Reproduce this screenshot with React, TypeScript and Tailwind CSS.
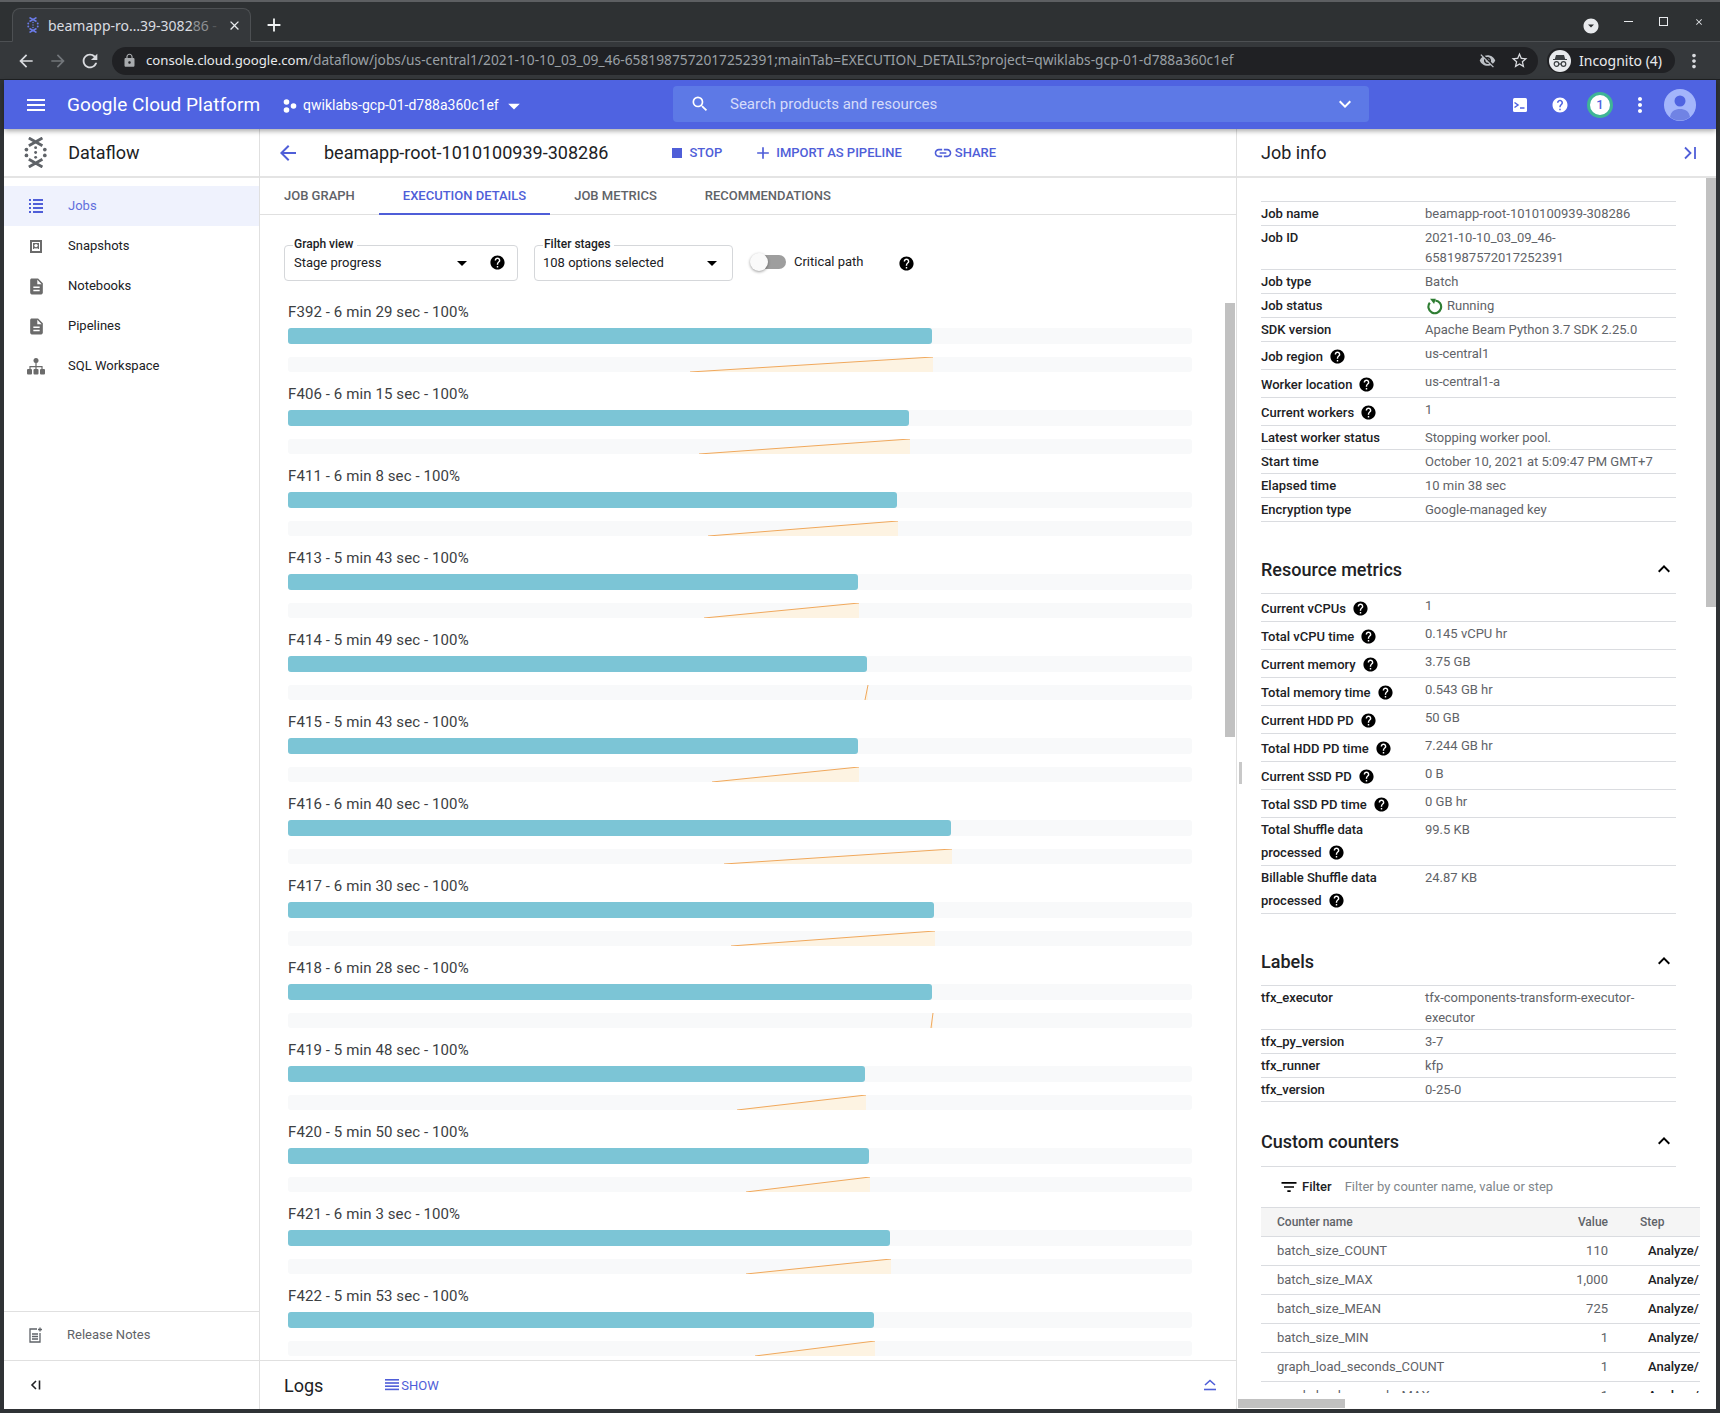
import React from "react";
import {
  MdAdd, MdArrowBack, MdArrowDropDown, MdArrowForward, MdClose, MdDescription, MdExpandLess, MdFilterList,
  MdHelp, MdKeyboardArrowDown, MdLink, MdLock, MdMenu, MdMoreVert, MdRefresh, MdSearch,
  MdStarBorder, MdVisibilityOff, MdArrowDropDownCircle,
} from "react-icons/md";

const ACCENT = "#4f5ed8";

const DataflowLogo = ({ size = 31, color = "#5f6368", className = "" }: { size?: number; color?: string; className?: string }) => (
  <svg width={size * 0.75} height={size} viewBox="0 0 24 32" className={className} fill="none">
    <path d="M5 1 L19 9 M19 1 L5 9 M5 23 L19 31 M19 23 L5 31" stroke={color} strokeWidth="2.9" />
    <circle cx="2.5" cy="13" r="1.9" fill={color} />
    <circle cx="21.5" cy="13" r="1.9" fill={color} />
    <circle cx="2.5" cy="19" r="1.9" fill={color} />
    <circle cx="21.5" cy="19" r="1.9" fill={color} />
    <circle cx="12" cy="11" r="1.5" fill={color} />
    <circle cx="12" cy="16" r="1.5" fill={color} />
    <circle cx="12" cy="21" r="1.5" fill={color} />
  </svg>
);

const Help = ({ size = 17, className = "" }: { size?: number; className?: string }) => (
  <MdHelp size={size} className={"shrink-0 text-black " + className} />
);

const Row = ({ label, value, help, tall, children }: { label: React.ReactNode; value?: React.ReactNode; help?: boolean; tall?: boolean; children?: React.ReactNode }) => (
  <div className={"flex border-b border-[#dadce0] text-[13px] " + (tall ? "pb-px" : help ? "h-[28px]" : "h-[24px]")}>
    <div className={"w-[164px] shrink-0 font-medium text-[#202124] " + (tall ? "leading-[23px]" : help ? "pt-[5px] leading-[20px] flex items-center self-start" : "pt-[1px] leading-[22px]")}>
      {label}
      {help && !tall && <Help className="ml-[6px] -mt-[1px]" />}
    </div>
    <div className={"flex-1 text-[#5f6368] " + (tall ? "leading-[23px]" : help ? "pt-[2px] leading-[20px]" : "pt-[1px] leading-[22px]")}>
      {value}
      {children}
    </div>
  </div>
);

const SectionHead = ({ title, h }: { title: string; h: string }) => (
  <div className={"flex items-end justify-between border-b border-[#dadce0] " + h}>
    <span className="text-[18px] leading-[22px] font-medium text-[#202124]">{title}</span>
    <MdExpandLess size={24} className="text-black" />
  </div>
);

const stages: [string, string, number, number][] = [
  ["F392", "6 min 29 sec", 932, 690],
  ["F406", "6 min 15 sec", 909, 699],
  ["F411", "6 min 8 sec", 897, 708],
  ["F413", "5 min 43 sec", 858, 704],
  ["F414", "5 min 49 sec", 867, 865],
  ["F415", "5 min 43 sec", 858, 712],
  ["F416", "6 min 40 sec", 951, 724],
  ["F417", "6 min 30 sec", 934, 731],
  ["F418", "6 min 28 sec", 932, 931],
  ["F419", "5 min 48 sec", 865, 737],
  ["F420", "5 min 50 sec", 869, 746],
  ["F421", "6 min 3 sec", 890, 746],
  ["F422", "5 min 53 sec", 874, 755],
];

const Stage = ({ name, time, end, start }: { name: string; time: string; end: number; start: number }) => {
  const e = end - 288;
  const s = start - 288;
  return (
    <div className="h-[82px] shrink-0">
      <div className="h-[20px] text-[15px] leading-[20px] font-normal tracking-[0.1px] text-[#3c4043]">{`${name} - ${time} - 100%`}</div>
      <div className="mt-[6px] h-[16px] rounded-[3px] bg-[#f8f9fa]">
        <div className="h-full rounded-[3px] bg-[#7cc5d6]" style={{ width: e }} />
      </div>
      <div className="mt-[13px] h-[15px] rounded-[3px] bg-[#f8f9fa]">
        <svg width="904" height="15" viewBox="0 0 904 15" className="block">
          <polygon points={`${s},15 ${e + 1},0 ${e + 1},15`} fill="#fdf3e2" />
          <line x1={s} y1="15" x2={e + 1} y2="0" stroke="#f0a85c" strokeWidth="1" />
        </svg>
      </div>
    </div>
  );
};

const counters: [string, string][] = [
  ["batch_size_COUNT", "110"],
  ["batch_size_MAX", "1,000"],
  ["batch_size_MEAN", "725"],
  ["batch_size_MIN", "1"],
  ["graph_load_seconds_COUNT", "1"],
  ["graph_load_seconds_MAX", "1"],
];

const navItems: [React.ReactNode, string][] = [
  [
    <svg width="16" height="16" viewBox="0 0 16 16" fill="#6b6b6b"><path d="M2 2h12v13H2zM4 4v9h8V4z" /><path d="M4 4h8v9H4z" fill="#fff" /><path d="M5 5h6v6H5z" fill="#6b6b6b" /><circle cx="8" cy="7.6" r="1.7" fill="#fff" /><path d="M6 10h4v0.6H6z" fill="#fff" /></svg>,
    "Snapshots",
  ],
  [<MdDescription size={19} className="text-[#6b6b6b]" />, "Notebooks"],
  [<MdDescription size={19} className="text-[#6b6b6b]" />, "Pipelines"],
  [
    <svg width="18" height="17" viewBox="0 0 18 17" fill="#6b6b6b"><circle cx="9" cy="2.5" r="2.5" /><path d="M8.4 4h1.2v4H15.6v3h-1.2V9.2H9.6V11H8.4V9.2H3.6V11H2.4V8H8.4z" /><rect x="0" y="11" width="5" height="5.5" rx="1" /><rect x="6.5" y="11" width="5" height="5.5" rx="1" /><rect x="13" y="11" width="5" height="5.5" rx="1" /></svg>,
    "SQL Workspace",
  ],
];

export default function App() {
  return (
    <div className="w-[1720px] h-[1413px] flex flex-col overflow-hidden bg-[#2f3235] font-['Roboto',sans-serif]">
      {/* Browser tab strip */}
      <div className="h-[42px] shrink-0 border-t-[2px] border-[#5d5f62] border-b border-b-[#4d5053] flex items-end pl-[12px] bg-[#2e3133] relative">
        <div className="h-[34px] w-[239px] -mb-px rounded-t-[8px] bg-[#35383b] border border-[#4d5053] border-b-[#35383b] flex items-center pl-[14px] pr-[8px] font-['Noto_Sans',sans-serif] text-[14px] text-[#dadce0]">
          <DataflowLogo size={16} color="#6b7be8" />
          <span className="ml-[9px] whitespace-nowrap">beamapp-ro…39-3082<span className="text-[#8d9093]">86</span><span className="text-[#55585b]"> -</span></span>
          <MdClose size={15} className="ml-auto text-[#e8eaed]" />
        </div>
        <MdAdd size={22} className="ml-[12px] mb-[5px] text-[#f1f3f4]" />
        <div className="ml-auto flex items-center h-[34px] mb-[1px] pr-[4px] text-[#e8eaed]">
          <MdArrowDropDownCircle size={18} className="mr-[11px] mt-[6px] text-[#e8eaed]" />
          <span className="w-[35px] flex justify-center -mt-[3px]"><span className="block w-[9px] h-px bg-[#e8eaed]" /></span>
          <span className="w-[35px] flex justify-center -mt-[3px]"><span className="block w-[9px] h-[9px] border border-[#e8eaed]" /></span>
          <span className="w-[35px] flex justify-center -mt-[3px]"><MdClose size={10} /></span>
        </div>
      </div>
      {/* Browser toolbar */}
      <div className="h-[38px] shrink-0 bg-[#35383b] flex items-center pl-[16px] text-[#dadce0] border-b-[1px] border-b-[#1f2123]">
        <MdArrowBack size={20} />
        <MdArrowForward size={20} className="ml-[12px] text-[#72767a]" />
        <MdRefresh size={22} className="ml-[11px]" />
        <div className="ml-[11px] w-[1426px] h-[28px] rounded-full bg-[#202124] flex items-center pl-[10px] pr-[9px] font-['Noto_Sans',sans-serif] text-[13.76px] whitespace-nowrap">
          <MdLock size={15} className="text-[#a8abae]" />
          <span className="ml-[9px] text-[13.2px] text-[#e8eaed]">console.cloud.google.com</span>
          <span className="text-[#9aa0a6]">/dataflow/jobs/us-central1/2021-10-10_03_09_46-6581987572017252391;mainTab=EXECUTION_DETAILS?project=qwiklabs-gcp-01-d788a360c1ef</span>
          <MdVisibilityOff size={17} className="ml-auto text-[#bdc1c6]" />
          <MdStarBorder size={19} className="ml-[14px] text-[#dadce0]" />
        </div>
        <div className="ml-[9px] w-[128px] h-[25px] rounded-full bg-[#202124] flex items-center pl-[2px] font-['Noto_Sans',sans-serif] text-[14px] text-[#e8eaed] whitespace-nowrap">
          <span className="w-[22px] h-[22px] rounded-full bg-[#e8eaed] flex items-center justify-center">
            <svg width="18" height="16" viewBox="0 0 18 16" fill="none"><path d="M5 2h8l1.2 4H16v1H2V6h1.800z" fill="#3c4043" /><circle cx="5.500" cy="11" r="2.300" stroke="#3c4043" strokeWidth="1.200" /><circle cx="12.500" cy="11" r="2.300" stroke="#3c4043" strokeWidth="1.200" /><path d="M7.800 11h2.400" stroke="#3c4043" strokeWidth="1.200" /></svg>
          </span>
          <span className="ml-[8px]">Incognito (4)</span>
        </div>
        <MdMoreVert size={22} className="ml-[8px] text-[#dadce0]" />
      </div>

      {/* Page */}
      <div className="flex-1 mx-[4px] mb-[4px] min-h-0 flex flex-col bg-white relative">
        {/* GCP header */}
        <div className="h-[49px] shrink-0 bg-[#4f63e1] flex items-center text-white relative z-10 shadow-[0_2px_5px_rgba(0,0,0,0.35)]">
          <div className="w-[669px] shrink-0 flex items-center pl-[20px] pt-[2px]">
            <MdMenu size={24} className="-mt-[2px]" />
            <span className="ml-[19px] w-[193px] text-[19px] font-normal tracking-[0.05px] whitespace-nowrap">Google Cloud Platform</span>
            <svg width="14" height="14" viewBox="0 0 14 14" fill="#fff" className="ml-[23px]"><circle cx="3.500" cy="3" r="2.800" /><circle cx="3.500" cy="11" r="2.800" /><circle cx="10.500" cy="7" r="2.800" /></svg>
            <span className="ml-[6px] text-[14px] whitespace-nowrap">qwiklabs-gcp-01-d788a360c1ef</span>
            <MdArrowDropDown size={28} className="ml-[1px]" />
          </div>
          <div className="w-[696px] h-[36px] -mt-[1px] rounded-[4px] bg-[#5d79e6] flex items-center pl-[17px] pr-[12px]">
            <MdSearch size={20} />
            <span className="ml-[20px] text-[15px] text-[#d6dcfa]">Search products and resources</span>
            <MdKeyboardArrowDown size={24} className="ml-auto" />
          </div>
          <div className="flex-1 flex items-center justify-end pr-[16px]">
            <span className="w-[40px] flex justify-center">
              <svg width="14" height="14" viewBox="0 0 14 14"><rect width="14" height="14" rx="1.500" fill="#fff" /><path d="M1.500 4.500 L5 7 L1.500 9.500" fill="none" stroke="#4f63e1" strokeWidth="1.500" /><path d="M7 10h4.500" stroke="#4f63e1" strokeWidth="1.500" /></svg>
            </span>
            <span className="w-[40px] flex justify-center"><MdHelp size={18} /></span>
            <span className="w-[40px] flex justify-center">
              <span className="w-[26px] h-[26px] rounded-full bg-white border-[3px] border-[#3fb596] flex items-center justify-center text-[13px] font-medium text-[#4f63e1]">1</span>
            </span>
            <span className="w-[40px] flex justify-center"><MdMoreVert size={24} /></span>
            <span className="w-[40px] flex justify-center">
              <svg width="32" height="32" viewBox="0 0 32 32"><circle cx="16" cy="16" r="16" fill="#a3b5fb" /><circle cx="16" cy="12" r="5.500" fill="#4f63e1" /><path d="M6 28c1-6 5-8 10-8s9 2 10 8a16 16 0 0 1-20 0z" fill="#7083e4" /></svg>
            </span>
          </div>
        </div>

        {/* Below header */}
        <div className="flex-1 min-h-0 flex">
          {/* Left nav */}
          <div className="w-[256px] shrink-0 border-r border-[#e0e0e0] flex flex-col">
            <div className="h-[49px] shrink-0 border-b-[2px] border-[#e4e4e4] flex items-center pl-[20px]">
              <DataflowLogo size={31} />
              <span className="ml-[21px] text-[18px] text-[#202124]">Dataflow</span>
            </div>
            <div className="pt-[8px] flex-1">
              <div className="h-[40px] bg-[#eff2fd] flex items-center pl-[25px] text-[13px] text-[#5f6fdc]">
                <svg width="14" height="14" viewBox="0 0 14 14" fill="#4f5ed8"><rect y="0" width="2" height="2" /><rect x="4" y="0" width="10" height="2" /><rect y="4" width="2" height="2" /><rect x="4" y="4" width="10" height="2" /><rect y="8" width="2" height="2" /><rect x="4" y="8" width="10" height="2" /><rect y="12" width="2" height="2" /><rect x="4" y="12" width="10" height="2" /></svg>
                <span className="ml-[25px]">Jobs</span>
              </div>
              {navItems.map(([icon, label]) => (
                <div key={label} className="h-[40px] flex items-center text-[13px] text-[#202124]">
                  <span className="w-[64px] flex justify-center">{icon}</span>
                  <span>{label}</span>
                </div>
              ))}
            </div>
            <div className="h-[49px] shrink-0 border-t border-[#e0e0e0] flex items-center pb-[2px] text-[13px] text-[#5f6368]">
              <span className="w-[63px] flex justify-center">
                <svg width="15" height="16" viewBox="0 0 15 16" fill="none" stroke="#5f6368" strokeWidth="1.300"><path d="M9 2H2v13h10V6" /><path d="M4 7h6M4 9.500h6M4 12h6" /><path d="M12 0.500v4M10 2.500h4" /></svg>
              </span>
              <span>Release Notes</span>
            </div>
            <div className="h-[49px] shrink-0 border-t border-[#e0e0e0] flex items-center">
              <span className="w-[64px] flex justify-center">
                <svg width="12" height="12" viewBox="0 0 12 12" fill="none" stroke="#202124" strokeWidth="1.600"><path d="M6 2 L2 6 L6 10" /><path d="M9.500 1.500v9" /></svg>
              </span>
            </div>
          </div>

          {/* Main */}
          <div className="w-[977px] shrink-0 flex flex-col border-r border-[#e0e0e0] min-h-0">
            <div className="h-[49px] shrink-0 border-b-[2px] border-[#e4e4e4] flex items-center pl-[16px] text-[13px] font-medium whitespace-nowrap" style={{ color: ACCENT }}>
              <MdArrowBack size={24} />
              <span className="ml-[24px] text-[18px] font-normal text-[#202124]">beamapp-root-1010100939-308286</span>
              <span className="ml-[64px] w-[10px] h-[10px]" style={{ background: ACCENT }} />
              <span className="ml-[7px]">STOP</span>
              <MdAdd size={20} className="ml-[31px]" />
              <span className="ml-[3px]">IMPORT AS PIPELINE</span>
              <MdLink size={20} className="ml-[31px] mr-[2px]" />
              <span>SHARE</span>
            </div>
            <div className="h-[37px] shrink-0 border-b border-[#e0e0e0] flex text-[13px] font-medium text-[#5f6368] whitespace-nowrap">
              <div className="px-[24px] flex items-center">JOB GRAPH</div>
              <div className="px-[24px] flex items-center border-b-[2px] -mb-px" style={{ color: ACCENT, borderColor: ACCENT }}>EXECUTION DETAILS</div>
              <div className="px-[24px] flex items-center">JOB METRICS</div>
              <div className="px-[24px] flex items-center">RECOMMENDATIONS</div>
            </div>
            <div className="flex-1 min-h-0 relative overflow-hidden pb-[4px] flex flex-col">
              <div className="h-[87px] shrink-0 pl-[24px] pt-[22px] flex items-start text-[13px] text-[#202124]">
                <fieldset className="w-[234px] h-[44px] border border-[#d5d7da] rounded-[4px] px-[9px] flex items-center">
                  <legend className="ml-[-1px] pl-[1px] pr-[4px] h-[16px] text-[12px] leading-[14px] font-medium">Graph view</legend>
                  <div className="flex items-center w-full -mt-[8px]">
                    <span>Stage progress</span>
                    <MdArrowDropDown size={24} className="ml-auto text-black" />
                    <Help className="ml-[15px] mr-[2px]" />
                  </div>
                </fieldset>
                <fieldset className="ml-[16px] w-[199px] h-[44px] border border-[#d5d7da] rounded-[4px] px-[8px] flex items-center">
                  <legend className="pr-[4px] pl-[1px] h-[16px] text-[12px] leading-[14px] font-medium">Filter stages</legend>
                  <div className="flex items-center w-full -mt-[8px]">
                    <span>108 options selected</span>
                    <MdArrowDropDown size={24} className="ml-auto text-black" />
                  </div>
                </fieldset>
                <div className="ml-[23px] mt-[15px] flex items-center">
                  <div className="relative w-[30px] h-[14px] rounded-full bg-[#9e9e9e]">
                    <span className="absolute -left-[6px] -top-[2px] w-[18px] h-[18px] rounded-full bg-[#fafafa] shadow-[0_1px_3px_rgba(0,0,0,0.4)]" />
                  </div>
                  <span className="ml-[8px]">Critical path</span>
                  <Help className="ml-[34px] mt-[3px]" />
                </div>
              </div>
              <div className="pl-[28px] w-[932px] flex-1 overflow-hidden">
                {stages.map(([name, time, end, start]) => (
                  <Stage key={name} name={name} time={time} end={end} start={start} />
                ))}
              </div>
              <div className="absolute right-[1px] top-[88px] w-[10px] h-[434px] bg-[#c1c1c1]" />
            </div>
            <div className="h-[49px] shrink-0 border-t border-[#e0e0e0] flex items-center pl-[24px]">
              <span className="text-[18px] text-[#202124]">Logs</span>
              <svg width="14" height="12" viewBox="0 0 14 12" fill={ACCENT} className="ml-[62px] -mt-[1px]"><rect width="14" height="1.600" /><rect y="3.200" width="14" height="1.600" /><rect y="6.400" width="14" height="1.600" /><rect y="9.600" width="14" height="1.600" /></svg>
              <span className="ml-[2px] mt-[1px] text-[13px]" style={{ color: ACCENT }}>SHOW</span>
              <svg width="14" height="12" viewBox="0 0 14 12" fill="none" stroke={ACCENT} strokeWidth="1.600" className="ml-auto mr-[19px]"><path d="M2 6 L7 1.500 L12 6" /><path d="M1 10.500h12" /></svg>
            </div>
          </div>

          {/* Right panel */}
          <div className="flex-1 min-w-0 flex flex-col relative">
            <div className="h-[49px] shrink-0 border-b-[2px] border-[#e4e4e4] flex items-center pl-[24px]">
              <span className="text-[18px] text-[#202124]">Job info</span>
              <svg width="14" height="14" viewBox="0 0 14 14" fill="none" stroke={ACCENT} strokeWidth="1.800" className="ml-auto mr-[19px]"><path d="M2 1.500 L7.500 7 L2 12.500" /><path d="M12 1v12" /></svg>
            </div>
            <div className="absolute left-[2px] top-[633px] w-[3px] h-[22px] bg-[#c8c8c8]" />
            <div className="h-[1215px] shrink-0 relative overflow-hidden pl-[24px]">
              <div className="absolute right-0 top-0 w-[10px] h-[429px] bg-[#c1c1c1]" />
              <div className="w-[415px] pt-[23px]">
                <div className="border-t border-[#dadce0]">
                  <Row label="Job name" value="beamapp-root-1010100939-308286" />
                  <div className="flex border-b border-[#dadce0] text-[13px] h-[44px]">
                    <div className="w-[164px] font-medium text-[#202124] leading-[20px] pt-[2px]">Job ID</div>
                    <div className="text-[#5f6368] leading-[20px] pt-[2px]">2021-10-10_03_09_46-<br />6581987572017252391</div>
                  </div>
                  <Row label="Job type" value="Batch" />
                  <Row label="Job status">
                    <span className="flex items-center h-[22px]">
                      <svg width="17" height="17" viewBox="0 0 16 16" fill="none" className="ml-[1px] mr-[4px]"><path d="M8.800 2.300a6 6 0 1 1-5.200 2.200" stroke="#2e7d32" strokeWidth="2" /><path d="M3.800 0.800 L9.200 0.800 L7.600 5.600z" fill="#2e7d32" /></svg>
                      Running
                    </span>
                  </Row>
                  <Row label="SDK version" value="Apache Beam Python 3.7 SDK 2.25.0" />
                  <Row label="Job region" value="us-central1" help />
                  <Row label="Worker location" value="us-central1-a" help />
                  <Row label="Current workers" value="1" help />
                  <Row label="Latest worker status" value="Stopping worker pool." />
                  <Row label="Start time" value="October 10, 2021 at 5:09:47 PM GMT+7" />
                  <Row label="Elapsed time" value="10 min 38 sec" />
                  <Row label="Encryption type" value="Google-managed key" />
                </div>
                <SectionHead title="Resource metrics" h="h-[72px] pb-[12px]" />
                <Row label="Current vCPUs" value="1" help />
                <Row label="Total vCPU time" value="0.145 vCPU hr" help />
                <Row label="Current memory" value="3.75 GB" help />
                <Row label="Total memory time" value="0.543 GB hr" help />
                <Row label="Current HDD PD" value="50 GB" help />
                <Row label="Total HDD PD time" value="7.244 GB hr" help />
                <Row label="Current SSD PD" value="0 B" help />
                <Row label="Total SSD PD time" value="0 GB hr" help />
                <Row tall value="99.5 KB" label={<>Total Shuffle data<br /><span className="flex items-center">processed<Help className="ml-[6px]" /></span></>} />
                <Row tall value="24.87 KB" label={<>Billable Shuffle data<br /><span className="flex items-center">processed<Help className="ml-[6px]" /></span></>} />
                <SectionHead title="Labels" h="h-[72px] pb-[12px]" />
                <div className="flex border-b border-[#dadce0] text-[13px] h-[44px]">
                  <div className="w-[164px] font-medium text-[#202124] leading-[20px] pt-[2px]">tfx_executor</div>
                  <div className="text-[#5f6368] leading-[20px] pt-[2px]">tfx-components-transform-executor-<br />executor</div>
                </div>
                <Row label="tfx_py_version" value="3-7" />
                <Row label="tfx_runner" value="kfp" />
                <Row label="tfx_version" value="0-25-0" />
                <SectionHead title="Custom counters" h="h-[65px] pb-[13px]" />
              </div>
              <div className="w-[439px] text-[13px]">
                <div className="h-[41px] flex items-center border-b border-[#dadce0] pl-[18px]">
                  <MdFilterList size={20} className="text-black" />
                  <span className="ml-[3px] font-medium text-[#202124]">Filter</span>
                  <span className="ml-[13px] text-[#80868b]">Filter by counter name, value or step</span>
                </div>
                <div className="h-[29px] flex items-center bg-[#f5f5f5] border-b border-[#dadce0] pl-[16px] text-[12px] font-medium text-[#5f6368]">
                  <span className="w-[231px]">Counter name</span>
                  <span className="w-[100px] text-right">Value</span>
                  <span className="ml-[32px]">Step</span>
                </div>
                {counters.map(([n, v]) => (
                  <div key={n} className="h-[29px] flex items-center overflow-hidden whitespace-nowrap border-b border-[#dadce0] pl-[16px] text-[#5f6368]">
                    <span className="w-[231px] shrink-0">{n}</span>
                    <span className="w-[100px] shrink-0 text-right">{v}</span>
                    <span className="ml-[40px] font-medium text-[#202124]">Analyze/</span>
                  </div>
                ))}
              </div>
            </div>
            <div className="pt-[6px] pl-[1px]">
              <div className="w-[107px] h-[9px] bg-[#c1c1c1]" />
            </div>
          </div>
        </div>
      </div>
    </div>
  );
}
